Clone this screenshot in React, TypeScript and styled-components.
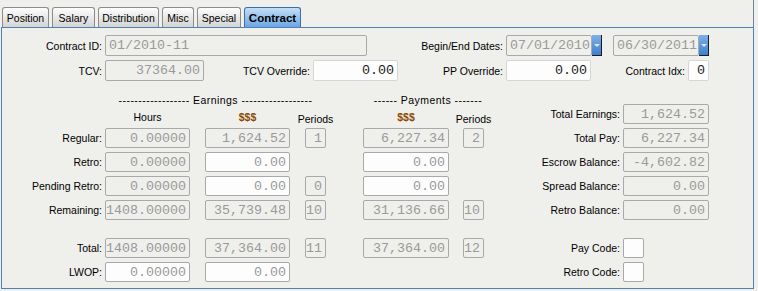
import styled, { createGlobalStyle, css } from "styled-components"

const GlobalStyle = createGlobalStyle`
  body {
    margin: 0;
    background: #efefec;
    font-family: "Liberation Sans", Arial, sans-serif;
    font-size: 10.5px;
    color: #000;
  }
`

type Place = { $row?: number; $col?: number; $span?: number; $rows?: number }

// grid placement, only has effect inside the lower grid
const place = css<Place>`
  ${(p) => (p.$row ? `grid-row: ${p.$row} / span ${p.$rows ?? 1};` : "")}
  ${(p) => (p.$col ? `grid-column: ${p.$col} / span ${p.$span ?? 1};` : "")}
  ${(p) => (p.$rows && p.$rows > 1 ? "align-self: end; height: 20px;" : "")}
`

const Page = styled.div`
  width: 754px;
  height: 291px;
`

const TabStrip = styled.div`
  display: flex;
  align-items: flex-end;
  gap: 3px;
  height: 27px;
  padding-left: 2px;
  box-sizing: border-box;
  border-right: 1px solid #71849a;
`

const Tab = styled.div<{ $w: number; $active?: boolean }>`
  width: ${(p) => p.$w}px;
  height: 20px;
  box-sizing: border-box;
  display: flex;
  align-items: center;
  justify-content: center;
  border: 1px solid ${(p) => (p.$active ? "#3d6fa6" : "#8c8c8c")};
  border-bottom: none;
  border-radius: 3px 3px 0 0;
  background: ${(p) =>
    p.$active ? "linear-gradient(#c4def6, #6ba6e3)" : "linear-gradient(#fdfdfd, #d4d4d2)"};
  font-size: ${(p) => (p.$active ? "11.5px" : "10.5px")};
  font-weight: ${(p) => (p.$active ? "bold" : "normal")};
  white-space: nowrap;
`

const Panel = styled.div`
  margin-left: 1px;
  width: 753px;
  height: 262px;
  box-sizing: border-box;
  border: 1px solid #4f80ba;
  padding: 7px 0 0 1px;
`

const TopRows = styled.div`
  display: flex;
  flex-direction: column;
  gap: 4px;
`

const TopRow = styled.div`
  display: flex;
  height: 21px;
`

const Label = styled.div<Place & { $w?: number }>`
  ${place}
  ${(p) => (p.$w ? `width: ${p.$w}px;` : "")}
  flex-shrink: 0;
  box-sizing: border-box;
  display: flex;
  align-items: center;
  justify-content: flex-end;
  padding-right: 3px;
  white-space: nowrap;
`

const Field = styled.div<
  Place & { $w?: number; $left?: boolean; $white?: boolean; $ink?: boolean; $soft?: boolean }
>`
  ${place}
  ${(p) => (p.$w ? `width: ${p.$w}px;` : "")}
  flex-shrink: 0;
  box-sizing: border-box;
  display: flex;
  align-items: center;
  justify-content: ${(p) => (p.$left ? "flex-start" : "flex-end")};
  padding: 0 3px;
  border: 1px solid ${(p) => (p.$soft ? "#d6d6d6" : "#a9a9a9")};
  border-radius: 2px;
  background: ${(p) => (p.$white ? "#fdfdfd" : "transparent")};
  color: ${(p) => (p.$ink ? "#1a1a1a" : "#9a9a9a")};
  font-family: "Liberation Mono", "Courier New", monospace;
  font-size: 13.33px;
  white-space: nowrap;
  overflow: hidden;
`

const DatePair = styled.div`
  display: flex;
  gap: 11px;
`

const DateBox = styled.div`
  display: flex;
  width: 96px;
`

const DropButton = styled.div`
  width: 10px;
  box-sizing: border-box;
  display: flex;
  align-items: center;
  justify-content: center;
  background: linear-gradient(#7db0e6, #3f7fcd);
  border-right: 1px solid #1c1c1c;
  border-bottom: 1px solid #1c1c1c;

  &::after {
    content: "";
    border-left: 3px solid transparent;
    border-right: 3px solid transparent;
    border-top: 3px solid #d9e8f8;
  }
`

const Grid = styled.div`
  display: grid;
  grid-template-columns: 102px 85px 15px 85px 15px 21px 37px 86px 14px 21px 139px 86px;
  grid-template-rows: 14px 13px repeat(4, 20px) 10px repeat(2, 20px);
  row-gap: 4px;
  margin-top: 12px;
`

const Heading = styled.div<Place & { $indent?: number }>`
  ${place}
  display: flex;
  justify-content: center;
  padding-left: ${(p) => p.$indent ?? 0}px;
  line-height: 14px;
  letter-spacing: 0.45px;
  white-space: nowrap;
`

const ColHead = styled.div<Place & { $money?: boolean; $low?: boolean }>`
  ${place}
  display: flex;
  justify-content: center;
  line-height: 13px;
  padding-top: ${(p) => (p.$low ? 2 : 0)}px;
  color: ${(p) => (p.$money ? "#8a4a00" : "#000")};
  font-weight: ${(p) => (p.$money ? "bold" : "normal")};
  white-space: nowrap;
`

const tabs: [string, number][] = [
  ["Position", 47],
  ["Salary", 43],
  ["Distribution", 61],
  ["Misc", 32],
  ["Special", 44],
  ["Contract", 57],
]

type Line = {
  label: string
  hours: string
  hoursWhite?: boolean
  earn: string
  earnWhite?: boolean
  ePer?: string
  pay?: string
  payWhite?: boolean
  pPer?: string
  side: string
  sideVal?: string
}

const lines: Line[] = [
  { label: "Regular:", hours: "0.00000", earn: "1,624.52", ePer: "1", pay: "6,227.34", pPer: "2", side: "Total Pay:", sideVal: "6,227.34" },
  { label: "Retro:", hours: "0.00000", earn: "0.00", earnWhite: true, pay: "0.00", payWhite: true, side: "Escrow Balance:", sideVal: "-4,602.82" },
  { label: "Pending Retro:", hours: "0.00000", earn: "0.00", earnWhite: true, ePer: "0", pay: "0.00", payWhite: true, side: "Spread Balance:", sideVal: "0.00" },
  { label: "Remaining:", hours: "1408.00000", earn: "35,739.48", ePer: "10", pay: "31,136.66", pPer: "10", side: "Retro Balance:", sideVal: "0.00" },
  { label: "Total:", hours: "1408.00000", earn: "37,364.00", ePer: "11", pay: "37,364.00", pPer: "12", side: "Pay Code:" },
  { label: "LWOP:", hours: "0.00000", hoursWhite: true, earn: "0.00", earnWhite: true, side: "Retro Code:" },
]

const LineRow = ({ line, row }: { line: Line; row: number }) => (
  <>
    <Label $row={row} $col={1}>{line.label}</Label>
    <Field $row={row} $col={2} $white={line.hoursWhite}>{line.hours}</Field>
    <Field $row={row} $col={4} $white={line.earnWhite}>{line.earn}</Field>
    {line.ePer && <Field $row={row} $col={6}>{line.ePer}</Field>}
    {line.pay && <Field $row={row} $col={8} $white={line.payWhite}>{line.pay}</Field>}
    {line.pPer && <Field $row={row} $col={10}>{line.pPer}</Field>}
    <Label $row={row} $col={11}>{line.side}</Label>
    {line.sideVal ? (
      <Field $row={row} $col={12}>{line.sideVal}</Field>
    ) : (
      <Field $row={row} $col={12} $w={21} $white />
    )}
  </>
)

const DateField = ({ value }: { value: string }) => (
  <DateBox>
    <Field $w={86} $left>{value}</Field>
    <DropButton />
  </DateBox>
)

export default function App() {
  return (
    <Page>
      <GlobalStyle />
      <TabStrip>
        {tabs.map(([name, w]) => (
          <Tab key={name} $w={w} $active={name === "Contract"}>
            {name}
          </Tab>
        ))}
      </TabStrip>
      <Panel>
        <TopRows>
          <TopRow>
            <Label $w={102}>Contract ID:</Label>
            <Field $w={262} $left>01/2010-11</Field>
            <Label $w={139}>Begin/End Dates:</Label>
            <DatePair>
              <DateField value="07/01/2010" />
              <DateField value="06/30/2011" />
            </DatePair>
          </TopRow>
          <TopRow>
            <Label $w={102}>TCV:</Label>
            <Field $w={99}>37364.00</Field>
            <Label $w={109}>TCV Override:</Label>
            <Field $w={85} $white $ink $soft>0.00</Field>
            <Label $w={108}>PP Override:</Label>
            <Field $w={85} $white $ink $soft>0.00</Field>
            <Label $w={97}>Contract Idx:</Label>
            <Field $w={21} $white $ink $soft>0</Field>
          </TopRow>
        </TopRows>
        <Grid>
          <Heading $row={1} $col={2} $span={5}>------------------ Earnings ------------------</Heading>
          <Heading $row={1} $col={8} $span={3} $indent={9}>------ Payments -------</Heading>
          <ColHead $row={2} $col={2}>Hours</ColHead>
          <ColHead $row={2} $col={4} $money>$$$</ColHead>
          <ColHead $row={2} $col={6} $low>Periods</ColHead>
          <ColHead $row={2} $col={8} $money>$$$</ColHead>
          <ColHead $row={2} $col={10} $low>Periods</ColHead>
          <Label $row={1} $rows={2} $col={11}>Total Earnings:</Label>
          <Field $row={1} $rows={2} $col={12}>1,624.52</Field>
          {lines.map((line, i) => (
            <LineRow key={line.label} line={line} row={i < 4 ? i + 3 : i + 4} />
          ))}
        </Grid>
      </Panel>
    </Page>
  )
}
